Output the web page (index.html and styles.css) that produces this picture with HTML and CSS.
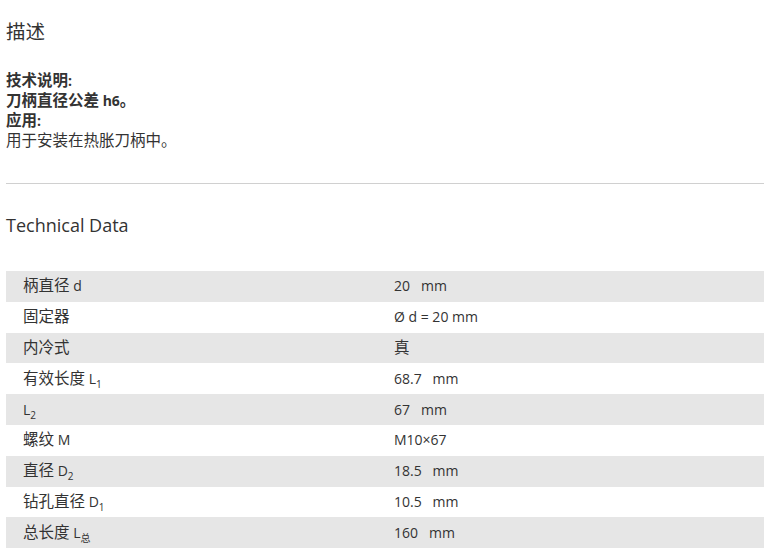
FILE: index.html
```html
<!DOCTYPE html>
<html lang="zh-CN">
<head>
<meta charset="utf-8">
<title>描述</title>
<link rel="stylesheet" href="styles.css">
</head>
<body>
<div class="page">
  <h2 class="title">描述</h2>
  <div class="desc">
    <p class="b"><span class="z">技术说明</span>:</p>
    <p class="b"><span class="z">刀柄直径公差</span> h6<span class="z">。</span></p>
    <p class="b"><span class="z">应用</span>:</p>
    <p><span class="z">用于安装在热胀刀柄中。</span></p>
  </div>
  <hr class="rule">
  <h3 class="subtitle">Technical Data</h3>
  <table class="data">
    <tr><td class="k"><span class="z">柄直径</span> d</td><td class="v">20&nbsp;&nbsp; mm</td></tr>
    <tr><td class="k"><span class="z">固定器</span></td><td class="v">Ø d = 20 mm</td></tr>
    <tr><td class="k"><span class="z">内冷式</span></td><td class="v"><span class="z">真</span></td></tr>
    <tr><td class="k"><span class="z">有效长度</span> L<sub>1</sub></td><td class="v">68.7&nbsp;&nbsp; mm</td></tr>
    <tr><td class="k">L<sub>2</sub></td><td class="v">67&nbsp;&nbsp; mm</td></tr>
    <tr><td class="k"><span class="z">螺纹</span> M</td><td class="v">M10×67</td></tr>
    <tr><td class="k"><span class="z">直径</span> D<sub>2</sub></td><td class="v">18.5&nbsp;&nbsp; mm</td></tr>
    <tr><td class="k"><span class="z">钻孔直径</span> D<sub>1</sub></td><td class="v">10.5&nbsp;&nbsp; mm</td></tr>
    <tr><td class="k"><span class="z">总长度</span> L<sub>总</sub></td><td class="v">160&nbsp;&nbsp; mm</td></tr>
  </table>
</div>
</body>
</html>
```

FILE: styles.css
```css
html, body {
  margin: 0;
  padding: 0;
  background: #fff;
}
body {
  font-family: "Open Sans", "Noto Sans CJK SC", sans-serif;
  color: #333;
}
.page {
  width: 758px;
  margin: 0 0 0 6px;
  padding-top: 18px;
}
.z {
  font-family: "Noto Sans CJK SC", sans-serif;
  font-size: 15.5px;
  line-height: 1;
}
.title {
  margin: 0;
  font-family: "Noto Sans CJK SC", sans-serif;
  font-size: 19.5px;
  font-weight: normal;
  line-height: 26px;
}
.desc {
  margin-top: 27px;
  font-size: 14px;
  line-height: 20px;
}
.desc p {
  margin: 0;
}
.desc .b {
  font-weight: bold;
}
.rule {
  margin: 32px 0 0 0;
  border: 0;
  border-top: 1px solid #d0d0d0;
  height: 0;
}
.subtitle {
  margin: 28px 0 0 0;
  font-size: 18px;
  font-weight: normal;
  line-height: 26px;
}
.data {
  margin-top: 33px;
  width: 758px;
  border-collapse: collapse;
  font-size: 14px;
}
.data tr {
  height: 30.8px;
}
.data tr:nth-child(odd) {
  background: #e6e6e6;
}
.data td {
  padding: 0 0 0 17px;
  vertical-align: middle;
  line-height: 20px;
}
.data td.k {
  width: 354px;
}
.data sub {
  font-size: 10px;
  vertical-align: -4px;
  line-height: 0;
}
```
